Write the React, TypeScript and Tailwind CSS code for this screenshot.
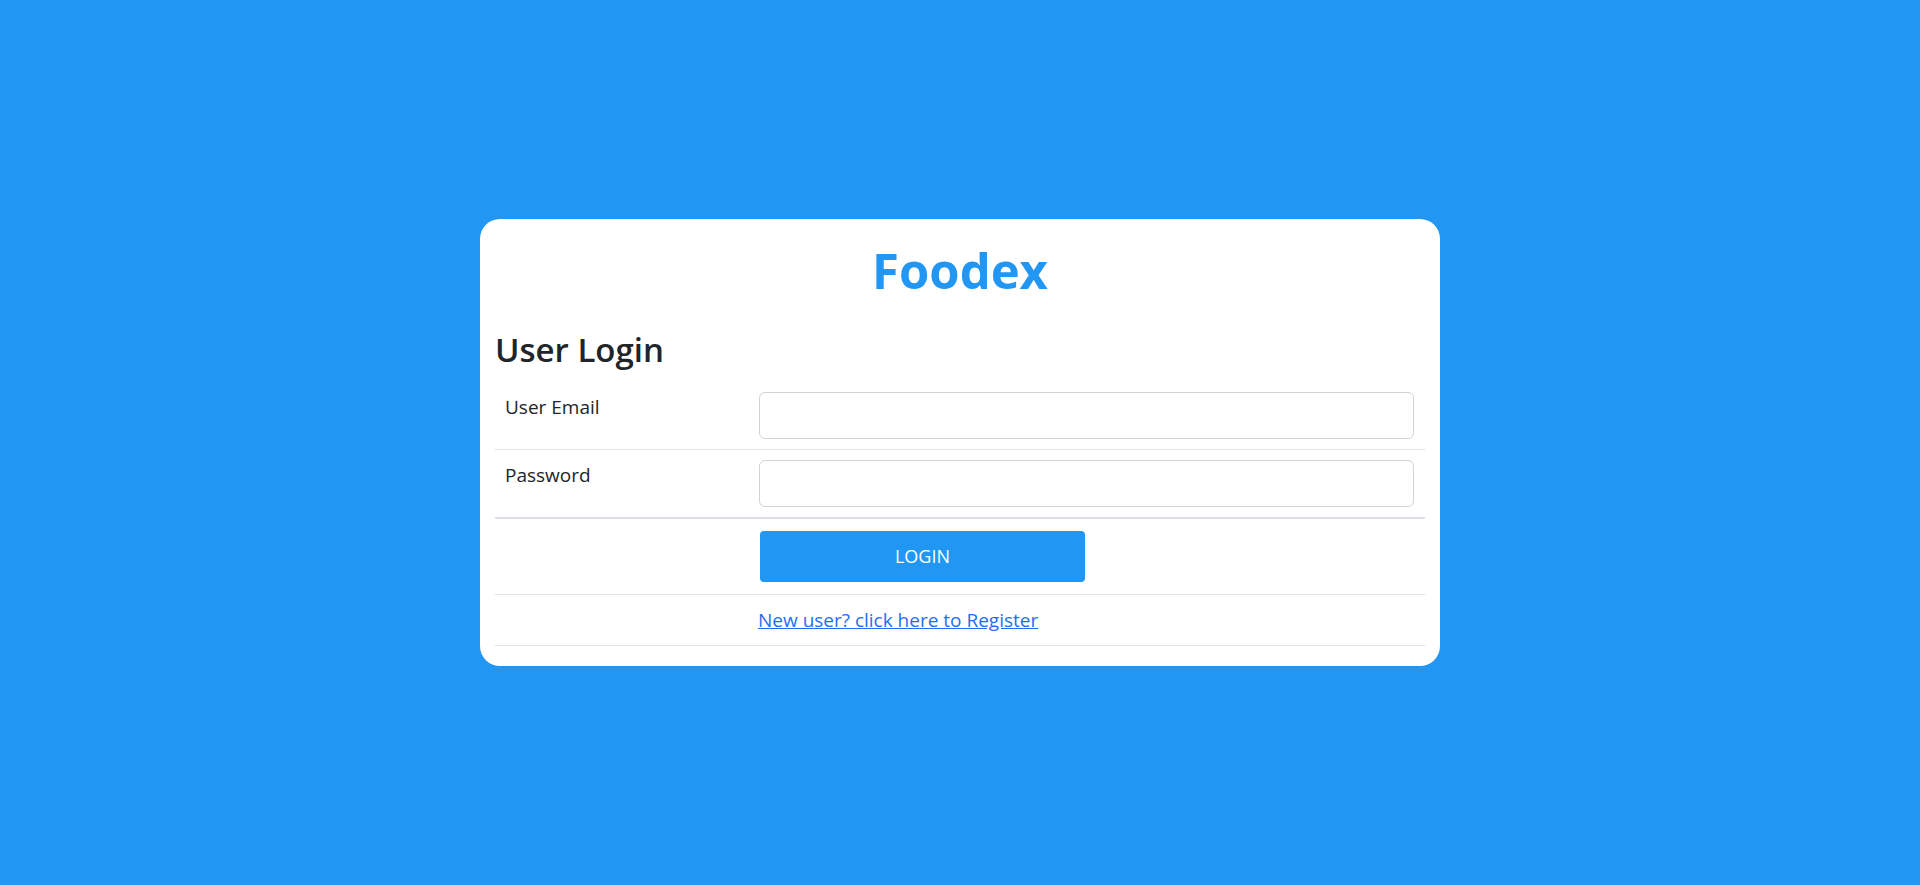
import { useState } from 'react';

export default function App() {
  const [email, setEmail] = useState('');
  const [password, setPassword] = useState('');

  return (
    <div
      className="min-h-screen w-full bg-[#2196f3] flex items-center justify-center"
      style={{ fontFamily: '"Open Sans", "Noto Sans", sans-serif' }}
    >
      <div className="w-[960px] bg-white rounded-[20px] px-[15px] pt-[22px] pb-[20px] text-[#212529]">
        <h1 className="text-center text-[49px] leading-[59px] font-bold text-[#2196f3]">Foodex</h1>
        <h2 className="mt-[30px] mb-[12px] text-[33px] leading-[40px] font-semibold">User Login</h2>

        <div className="w-full">
          <div className="grid grid-cols-[254px_1fr] border-b border-[#dee2e6]">
            <div className="px-[10px] py-[10px] text-[19px] leading-[30px]">User Email</div>
            <div className="pl-[10px] pr-[11px] py-[10px]">
              <input
                type="email"
                value={email}
                onChange={(e) => setEmail(e.target.value)}
                className="w-full h-[47px] border border-[#ced4da] rounded-[6px] px-3 text-[19px] outline-none"
              />
            </div>
          </div>

          <div className="grid grid-cols-[254px_1fr] border-b-2 border-[#dcdfe3]">
            <div className="px-[10px] py-[10px] text-[19px] leading-[30px]">Password</div>
            <div className="pl-[10px] pr-[11px] py-[10px]">
              <input
                type="password"
                value={password}
                onChange={(e) => setPassword(e.target.value)}
                className="w-full h-[47px] border border-[#ced4da] rounded-[6px] px-3 text-[19px] outline-none"
              />
            </div>
          </div>

          <div className="grid grid-cols-[254px_1fr] border-b border-[#dee2e6]">
            <div className="py-[12px]"></div>
            <div className="pl-[11px] py-[12px]">
              <button className="w-[325px] h-[51px] bg-[#2196f3] text-white text-[18px] rounded-[4px]">
                LOGIN
              </button>
            </div>
          </div>

          <div className="grid grid-cols-[254px_1fr] border-b border-[#dee2e6]">
            <div className="py-[10px]"></div>
            <div className="pl-[9px] py-[10px] text-[19px] leading-[30px]">
              <a href="#" className="text-[#1f6ef5] underline">
                New user? click here to Register
              </a>
            </div>
          </div>
        </div>
      </div>
    </div>
  );
}
